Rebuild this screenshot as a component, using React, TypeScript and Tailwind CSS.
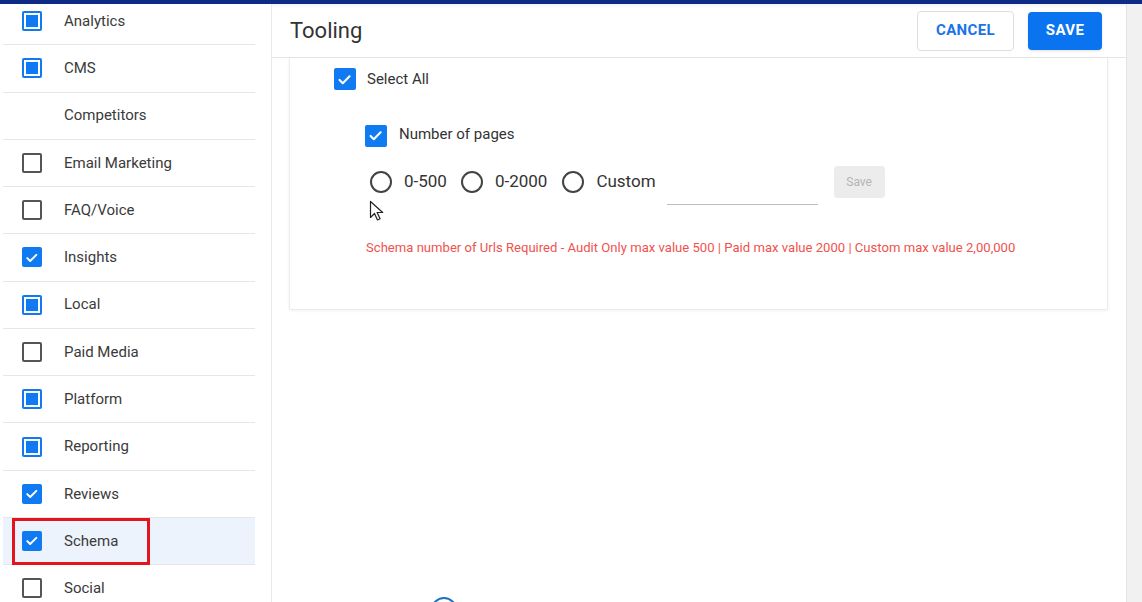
import React from "react"

type Mark = "partial" | "checked" | "empty" | "none"

const items: { label: string; mark: Mark }[] = [
  { label: "Analytics", mark: "partial" },
  { label: "CMS", mark: "partial" },
  { label: "Competitors", mark: "none" },
  { label: "Email Marketing", mark: "empty" },
  { label: "FAQ/Voice", mark: "empty" },
  { label: "Insights", mark: "checked" },
  { label: "Local", mark: "partial" },
  { label: "Paid Media", mark: "empty" },
  { label: "Platform", mark: "partial" },
  { label: "Reporting", mark: "partial" },
  { label: "Reviews", mark: "checked" },
  { label: "Schema", mark: "checked" },
  { label: "Social", mark: "empty" },
]

function CheckIcon({ size = 20 }: { size?: number }) {
  return (
    <span
      className="grid shrink-0 place-items-center rounded-[2px] bg-[#0f7af2]"
      style={{ width: size, height: size }}
    >
      <svg viewBox="0 0 24 24" className="size-[78%]" fill="none" stroke="white" strokeWidth={3} strokeLinecap="round" strokeLinejoin="round">
        <path d="M5 12.5l4.5 4.5L19 7.5" />
      </svg>
    </span>
  )
}

function Box({ mark }: { mark: Mark }) {
  if (mark === "none") return <span className="w-[20px] shrink-0" />
  if (mark === "checked") return <CheckIcon />
  if (mark === "partial")
    return (
      <span className="grid size-[20px] shrink-0 place-items-center rounded-[2px] border-2 border-[#0f7af2] bg-white">
        <span className="size-[12px] bg-[#0f7af2]" />
      </span>
    )
  return <span className="size-[20px] shrink-0 rounded-[2px] border-2 border-[#555]" />
}

function Radio({ label }: { label: string }) {
  return (
    <label className="flex items-center gap-[12px]">
      <span className="size-[22px] rounded-full border-2 border-[#444]" />
      <span className="text-[17px] text-[#333]">{label}</span>
    </label>
  )
}

export default function App() {
  return (
    <div className="relative flex h-[602px] w-[1142px] flex-col overflow-hidden bg-white font-['Roboto',sans-serif]">
      <div className="h-[4px] shrink-0 bg-[#0d2a86]" />
      <div className="flex min-h-0 flex-1">
        <aside className="w-[272px] shrink-0 overflow-hidden border-r border-[#e9e9e9]">
          <ul className="-mt-[6px] ml-[3px] w-[252px]">
            {items.map((it) => (
              <li
                key={it.label}
                className={`relative flex h-[47.27px] items-center gap-[22px] border-b border-[#e6e6e6] pl-[19px] ${
                  it.label === "Schema" ? "bg-[#edf3fc]" : ""
                }`}
              >
                <Box mark={it.mark} />
                <span className="text-[15px] text-[#3a3a3a]">{it.label}</span>
                {it.label === "Schema" && (
                  <span className="pointer-events-none absolute left-[9px] top-0 h-[47px] w-[138px] border-[3px] border-[#e3141b]" />
                )}
              </li>
            ))}
          </ul>
        </aside>

        <main className="flex min-w-0 flex-1 flex-col">
          <header className="flex h-[54px] shrink-0 items-center justify-between border-b border-[#e6e6e6] pl-[18px] pr-[24px] shadow-[inset_0_4px_4px_-3px_rgba(0,0,0,0.08)]">
            <h1 className="text-[22px] text-[#333]">Tooling</h1>
            <div className="flex items-center gap-[14px]">
              <button className="h-[40px] w-[97px] rounded-[4px] border border-[#dedede] bg-white text-[15px] font-bold tracking-wide text-[#1a73e8]">
                CANCEL
              </button>
              <button className="h-[38px] w-[74px] rounded-[4px] bg-[#0a74f0] text-[15px] font-bold tracking-wide text-white shadow-sm">
                SAVE
              </button>
            </div>
          </header>

          <section className="ml-[17px] mr-[18px] h-[252px] rounded-b-[2px] border border-t-0 border-[#ececec] bg-white pl-[44px] pt-[10px] shadow-[0_1px_3px_rgba(0,0,0,0.06)]">
            <div className="flex items-center gap-[11px]">
              <CheckIcon size={22} />
              <span className="text-[15px] text-[#333]">Select All</span>
            </div>

            <div className="ml-[31px] mt-[34px] flex items-start gap-[12px]">
              <CheckIcon size={22} />
              <span className="-mt-[2px] text-[15px] text-[#333]">Number of pages</span>
            </div>

            <div className="ml-[36px] mt-[19px] flex items-center">
              <div className="flex items-center gap-[14px]">
                <Radio label="0-500" />
                <Radio label="0-2000" />
                <span className="ml-[1px]">
                  <Radio label="Custom" />
                </span>
              </div>
              <div className="ml-[11px] h-[1px] w-[151px] translate-y-[23px] bg-[#bdbdbd]" />
              <button className="ml-[16px] h-[32px] w-[51px] rounded-[4px] bg-[#ececec] text-[12px] text-[#b5b5b5]">
                Save
              </button>
            </div>

            <svg className="ml-[35px] mt-[2px] block" width="16" height="22" viewBox="0 0 16 22">
              <path d="M1.5 1.5v16l4-4 3 6.5 2.6-1.2-3-6.3h5.6z" fill="white" stroke="#222" strokeWidth="1.2" strokeLinejoin="round" />
            </svg>

            <p className="ml-[32px] mt-[16px] text-[13.1px] text-[#f0524d]">
              Schema number of Urls Required - Audit Only max value 500 | Paid max value 2000 | Custom max value 2,00,000
            </p>
          </section>
        </main>

        <div className="w-[16px] shrink-0 border-l border-[#e4e4e4] bg-[#f1f1f1]" />
      </div>

      <span className="absolute left-[431px] top-[597px] size-[26px] rounded-full border-2 border-[#1a73c8] bg-white" />
    </div>
  )
}
